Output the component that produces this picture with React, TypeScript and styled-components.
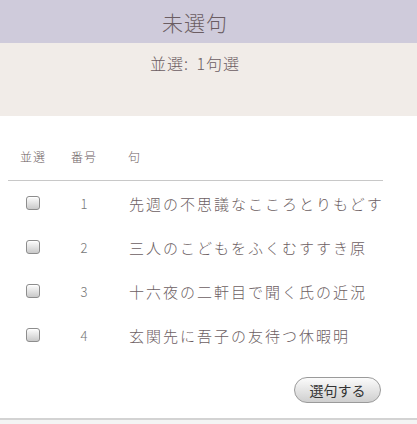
import React from 'react';
import styled, { createGlobalStyle } from 'styled-components';

const GlobalStyle = createGlobalStyle`
  html, body {
    margin: 0;
    padding: 0;
    background: #ffffff;
  }
  body {
    font-family: "Noto Sans CJK JP", "Noto Sans", sans-serif;
    color: #6c5e62;
  }
`;

const Page = styled.div`
  width: 417px;
  height: 424px;
  display: flex;
  flex-direction: column;
  overflow: hidden;
`;

const TitleBar = styled.header`
  height: 43px;
  background: #cfcbdb;
  display: flex;
  align-items: center;
  justify-content: center;
  padding-right: 27px;
`;

const Title = styled.h1`
  margin: 0;
  font-size: 21px;
  font-weight: 300;
  letter-spacing: 1px;
  color: #6b5d62;
`;

const Summary = styled.section`
  height: 73px;
  background: #f1ece8;
  display: flex;
  justify-content: center;
  padding-right: 27px;
  padding-top: 8px;
  box-sizing: border-box;
`;

const SummaryText = styled.p`
  margin: 0;
  font-size: 16px;
  font-weight: 300;
  letter-spacing: 1px;
  word-spacing: 3px;
  color: #6b5d62;
`;

const Body = styled.main`
  flex: 1;
  display: flex;
  flex-direction: column;
  padding: 28px 34px 0 8px;
`;

const Row = styled.div<{ $head?: boolean }>`
  display: grid;
  grid-template-columns: 50px 52px 1fr;
  align-items: center;
  height: ${p => (p.$head ? '24px' : '44px')};
  ${p => p.$head && 'padding-bottom: 12px; border-bottom: 1px solid #c8c8c8;'}
`;

const HeadCell = styled.div<{ $pad?: number }>`
  font-size: 12px;
  font-weight: 300;
  color: #6c5e62;
  letter-spacing: 1px;
  text-align: ${p => (p.$pad ? 'left' : 'center')};
  padding-left: ${p => p.$pad ?? 0}px;
`;

const Check = styled.input.attrs({ type: 'checkbox' })`
  appearance: none;
  margin: 0 auto;
  width: 14px;
  height: 14px;
  border: 1px solid #8d8d8d;
  border-radius: 3px;
  background: linear-gradient(#fdfdfd, #c9c9c9);
  box-shadow: inset 0 1px 1px rgba(255, 255, 255, 0.9);
`;

const Num = styled.div`
  font-size: 13px;
  font-weight: 300;
  text-align: center;
  color: #777;
`;

const Verse = styled.div`
  padding-left: 19px;
  font-size: 15px;
  font-weight: 300;
  letter-spacing: 2px;
  white-space: nowrap;
  color: #6c5e62;
`;

const Actions = styled.div`
  display: flex;
  justify-content: flex-end;
  margin-top: 20px;
  padding-right: 2px;
`;

const SubmitButton = styled.button`
  width: 87px;
  height: 26px;
  border: 1px solid #9a9a9a;
  border-radius: 13px;
  background: linear-gradient(#fbfbfb, #cfcfcf);
  font-family: "Noto Sans CJK JP", sans-serif;
  font-size: 14px;
  color: #333;
  padding: 0;
`;

const Footer = styled.div`
  margin-top: auto;
  height: 4px;
  border-top: 2px solid #d3d3d3;
  background: #f4f4f4;
`;

const verses = [
  '先週の不思議なこころとりもどす',
  '三人のこどもをふくむすすき原',
  '十六夜の二軒目で聞く氏の近況',
  '玄関先に吾子の友待つ休暇明',
];

const App = () => (
  <Page>
    <GlobalStyle />
    <TitleBar>
      <Title>未選句</Title>
    </TitleBar>
    <Summary>
      <SummaryText>並選: 1句選</SummaryText>
    </Summary>
    <Body>
      <Row $head>
        <HeadCell>並選</HeadCell>
        <HeadCell>番号</HeadCell>
        <HeadCell $pad={18}>句</HeadCell>
      </Row>
      {verses.map((v, i) => (
        <Row key={i}>
          <Check />
          <Num>{i + 1}</Num>
          <Verse>{v}</Verse>
        </Row>
      ))}
      <Actions>
        <SubmitButton type="button">選句する</SubmitButton>
      </Actions>
    </Body>
    <Footer />
  </Page>
);

export default App;
